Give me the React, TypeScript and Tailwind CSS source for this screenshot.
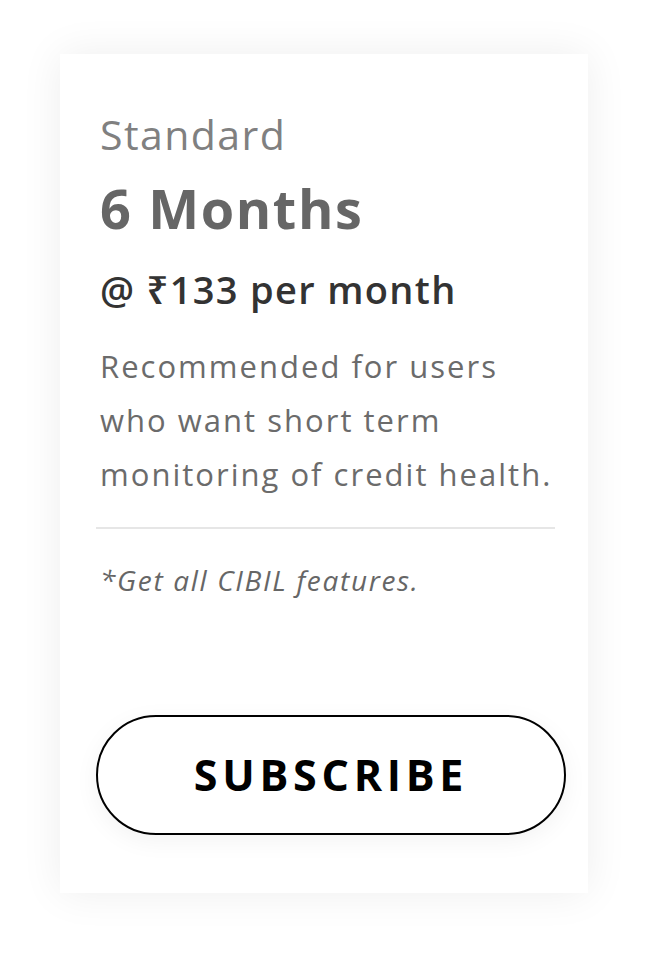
import React from "react";

export default function App() {
  return (
    <div className="min-h-[960px] w-[648px] bg-white pt-[54px] pl-[60px]" style={{ fontFamily: "'Open Sans', 'Noto Sans', sans-serif" }}>
      <div className="w-[528px] h-[839px] bg-white shadow-[0_0_40px_rgba(0,0,0,0.07)] pt-[60px] pl-[40px] flex flex-col">
        <div className="text-[41px] leading-[40px] text-[#808080] font-medium tracking-[0.035em]">Standard</div>
        <div className="text-[54px] leading-[54px] text-[#666666] font-bold mt-[27px] tracking-[0.03em]">6 Months</div>
        <div className="text-[38px] leading-[38px] text-[#333333] font-semibold mt-[35px] tracking-[0.035em]">@ ₹133 per month</div>
        <div className="text-[31px] leading-[54px] text-[#6b6b6b] mt-[31px] w-[466px] tracking-[0.065em]">
          Recommended for users who want short term monitoring of credit health.
        </div>
        <div className="h-[2px] bg-[#e6e6e6] w-[459px] -ml-[4px] mt-[26px]" />
        <div className="text-[28px] leading-[28px] italic text-[#666666] mt-[37px] tracking-[0.06em]">*Get all CIBIL features.</div>
        <button className="mt-[121px] -ml-[4px] w-[470px] h-[120px] rounded-full border-2 border-black bg-white shadow-[0_6px_24px_rgba(0,0,0,0.05)] text-[43px] font-bold tracking-[0.11em] text-black">
          SUBSCRIBE
        </button>
      </div>
    </div>
  );
}
